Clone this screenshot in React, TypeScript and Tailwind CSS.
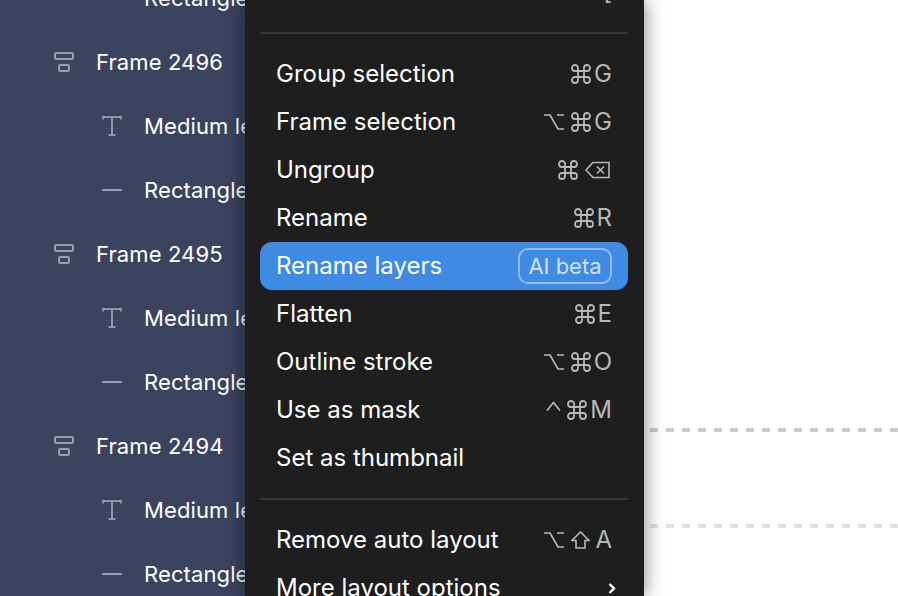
import React from 'react';

type LayerKind = 'frame' | 'text' | 'line';

const layers: { kind: LayerKind; name: string }[] = [
  { kind: 'line', name: 'Rectangle 1' },
  { kind: 'frame', name: 'Frame 2496' },
  { kind: 'text', name: 'Medium level' },
  { kind: 'line', name: 'Rectangle 1' },
  { kind: 'frame', name: 'Frame 2495' },
  { kind: 'text', name: 'Medium level' },
  { kind: 'line', name: 'Rectangle 1' },
  { kind: 'frame', name: 'Frame 2494' },
  { kind: 'text', name: 'Medium level' },
  { kind: 'line', name: 'Rectangle 1' },
];

const LayerIcon = ({ kind }: { kind: LayerKind }) => {
  if (kind === 'frame') {
    return (
      <svg width="20" height="20" viewBox="0 0 20 20" fill="none" stroke="#9a9eae" strokeWidth="2" className="shrink-0">
        <rect x="1" y="1" width="18" height="6" rx="1.5" />
        <rect x="5" y="13" width="10" height="6" rx="1.5" />
      </svg>
    );
  }
  if (kind === 'text') {
    return (
      <svg width="20" height="20" viewBox="0 0 20 20" fill="none" stroke="#9296a8" strokeWidth="2" className="shrink-0">
        <path d="M1 3.500V1h18v2.500M10 1v18M6.500 19h7" />
      </svg>
    );
  }
  return (
    <svg width="20" height="20" viewBox="0 0 20 20" fill="none" stroke="#9a9eae" strokeWidth="2" className="shrink-0">
      <path d="M0 10h20" />
    </svg>
  );
};

// keyboard symbols, drawn to match the menu's own glyphs
const Cmd = () => (
  <svg width="20" height="20" viewBox="0 0 20 20" fill="none" stroke="currentColor" strokeWidth="1.8" className="shrink-0">
    <path d="M13 4v12a3 3 0 1 0 3-3H4a3 3 0 1 0 3 3V4a3 3 0 1 0-3 3h12a3 3 0 1 0-3-3" />
  </svg>
);

const Opt = () => (
  <svg width="20" height="16" viewBox="0 0 20 16" fill="none" stroke="currentColor" strokeWidth="1.7" className="mr-1 shrink-0">
    <path d="M0 1h6l8 14h6M13 1h7" />
  </svg>
);

const Shift = () => (
  <svg width="19" height="18" viewBox="0 0 19 18" fill="none" stroke="currentColor" strokeWidth="1.6" className="mr-0.5 shrink-0">
    <path d="M9.5 1 18 9.5h-4V17H5V9.5H1Z" />
  </svg>
);

const Backspace = () => (
  <svg width="25" height="18" viewBox="0 0 25 18" fill="none" stroke="currentColor" strokeWidth="1.6" className="mr-0.5 ml-1 shrink-0">
    <path d="M1 9 8 1.500h16v15H8Z" />
    <path d="M12 5.500l7 7M19 5.500l-7 7" />
  </svg>
);

const Ctrl = () => (
  <svg width="15" height="10" viewBox="0 0 15 10" fill="none" stroke="currentColor" strokeWidth="1.7" className="mr-[3px] -mt-2 shrink-0">
    <path d="M1 9.500 7.500 1.500 14 9.500" />
  </svg>
);

const Key = ({ children }: { children: React.ReactNode }) => (
  <span className="text-[24px] leading-none">{children}</span>
);

const Submenu = () => (
  <svg width="8" height="11" viewBox="0 0 8 11" fill="none" stroke="white" strokeWidth="2.4" className="-mr-1 shrink-0">
    <path d="M1.500 1 6 5.500 1.500 10" />
  </svg>
);

type MenuRow = { label: string; keys?: React.ReactNode; active?: boolean };

const sections: MenuRow[][] = [
  [{ label: 'Send to back', keys: <Key>[</Key> }],
  [
    { label: 'Group selection', keys: <><Cmd /><Key>G</Key></> },
    { label: 'Frame selection', keys: <><Opt /><Cmd /><Key>G</Key></> },
    { label: 'Ungroup', keys: <><Cmd /><Backspace /></> },
    { label: 'Rename', keys: <><Cmd /><Key>R</Key></> },
    { label: 'Rename layers', active: true },
    { label: 'Flatten', keys: <><Cmd /><Key>E</Key></> },
    { label: 'Outline stroke', keys: <><Opt /><Cmd /><Key>O</Key></> },
    { label: 'Use as mask', keys: <><Ctrl /><Cmd /><Key>M</Key></> },
    { label: 'Set as thumbnail' },
  ],
  [
    { label: 'Remove auto layout', keys: <><Opt /><Shift /><Key>A</Key></> },
    { label: 'More layout options', keys: <Submenu /> },
  ],
];

export default function App() {
  return (
    <div className="flex h-[596px] w-[898px] overflow-hidden bg-white font-['Inter',sans-serif]">
      {/* Layers panel */}
      <div className="w-[245px] shrink-0 overflow-hidden bg-[#3c435f]">
        <div className="-mt-[34px] w-[400px]">
          {layers.map((layer, i) => (
            <div
              key={i}
              className={`flex h-16 items-center gap-[22px] text-[22px] tracking-[0.005em] whitespace-nowrap text-white ${
                layer.kind === 'frame' ? 'pl-[54px]' : 'pl-[102px]'
              }`}
            >
              <LayerIcon kind={layer.kind} />
              <span>{layer.name}</span>
            </div>
          ))}
        </div>
      </div>

      {/* Context menu */}
      <div className="relative z-10 w-[399px] shrink-0 bg-[#1e1e1e] shadow-[0_0_18px_rgba(0,0,0,0.5)]">
        <div className="-mt-8 pr-4 pl-[15px]">
          {sections.map((rows, s) => (
            <div key={s}>
              {s > 0 && <div className="my-4 h-0.5 bg-[#383838]" />}
              {rows.map((row) => (
                <div
                  key={row.label}
                  className={`flex h-12 items-center justify-between rounded-xl px-4 text-[24px] whitespace-nowrap text-white ${
                    row.active ? 'bg-[#3f8ae2]' : ''
                  }`}
                >
                  <span>{row.label}</span>
                  {row.active ? (
                    <span className="flex h-9 w-[94px] items-center justify-center rounded-[10px] border-2 border-[#8fbdf2] text-[22px] text-[#cfe3fb]">
                      AI beta
                    </span>
                  ) : (
                    <span className="flex items-center gap-[3px] text-[#b8b8b8]">{row.keys}</span>
                  )}
                </div>
              ))}
            </div>
          ))}
        </div>
      </div>

      {/* Canvas guides */}
      <div className="flex-1 pt-[428px] pl-1.5">
        <div className="h-1 bg-[repeating-linear-gradient(90deg,#cccccc_0,#cccccc_8px,transparent_8px,transparent_16px)]" />
        <div className="mt-[92px] h-1 bg-[repeating-linear-gradient(90deg,#e2e2e2_0,#e2e2e2_8px,transparent_8px,transparent_16px)]" />
      </div>
    </div>
  );
}
